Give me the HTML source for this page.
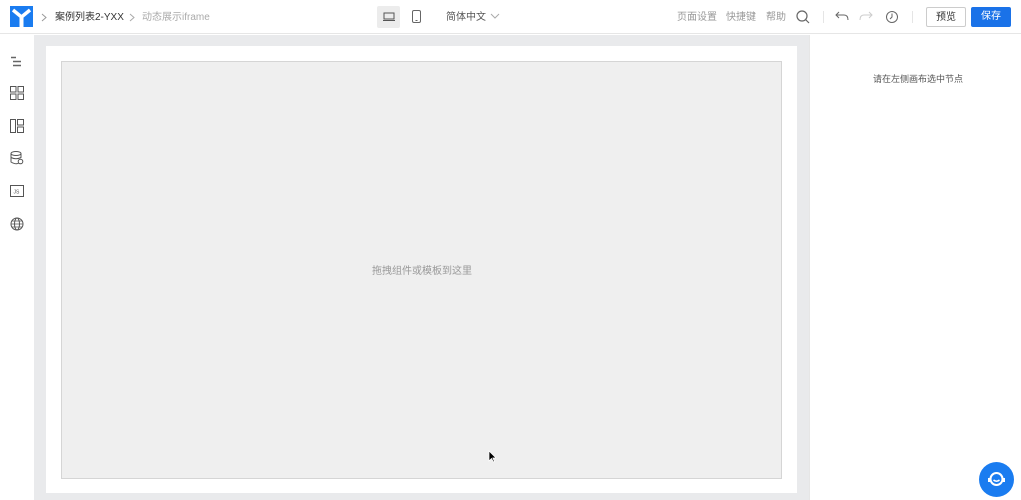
<!DOCTYPE html>
<html><head><meta charset="utf-8"><style>
*{margin:0;padding:0;box-sizing:border-box}
body{width:1021px;height:500px;overflow:hidden;background:#fff;font-family:"Liberation Sans","Noto Sans CJK SC",sans-serif;position:relative}
.hd{position:absolute;left:0;top:0;width:1021px;height:34px;border-bottom:1px solid #e6e6e6;background:#fff}
.t{position:absolute;font-size:10px;white-space:nowrap;line-height:12px}
.side{position:absolute;left:0;top:35px;width:34px;height:465px;background:#fff}
.canvas{position:absolute;left:34px;top:35px;width:775px;height:465px;background:#e9eaec}
.page{position:absolute;left:12px;top:11px;width:751px;height:447px;background:#fff}
.drop{position:absolute;left:15px;top:15px;width:721px;height:418px;background:#efefef;border:1px solid #d5d5d5}
.right{position:absolute;left:809px;top:35px;width:212px;height:465px;background:#fff}
svg{position:absolute}
</style></head><body>
<div class="hd">
 <div style="position:absolute;left:10px;top:6px;width:23px;height:21px;background:#1a7cf0"></div>
 <svg style="left:10px;top:6px" width="23" height="21"><path d="M3 4 L11.5 11 L20 4" stroke="#fff" stroke-width="3.5" fill="none"/><path d="M11.5 11 V21" stroke="#fff" stroke-width="4"/></svg>
 <svg style="left:41px;top:13px" width="6" height="9"><path d="M1 1L5 4.5L1 8" stroke="#999" fill="none"/></svg>
 <div class="t" style="left:55px;top:12px;color:#333">案例列表2-YXX</div>
 <svg style="left:129px;top:13px" width="6" height="9"><path d="M1 1L5 4.5L1 8" stroke="#aaa" fill="none"/></svg>
 <div class="t" style="left:142px;top:12px;color:#aaa">动态展示iframe</div>
 <div style="position:absolute;left:377px;top:6px;width:23px;height:22px;background:#ececec;border-radius:2px"></div>
 <svg style="left:383px;top:12px" width="12" height="10"><rect x="1" y="1" width="10" height="6" fill="none" stroke="#555"/><path d="M0 8.5H12" stroke="#555"/></svg>
 <svg style="left:412px;top:10px" width="9" height="14"><rect x="0.5" y="0.5" width="8" height="12" rx="1.5" fill="none" stroke="#666"/><path d="M3.5 10.5H5.5" stroke="#666"/></svg>
 <div class="t" style="left:446px;top:12px;color:#555">简体中文</div>
 <svg style="left:490px;top:13px" width="10" height="7"><path d="M1 1L5 5L9 1" stroke="#aaa" fill="none"/></svg>
 <div class="t" style="left:677px;top:12px;color:#999">页面设置</div>
 <div class="t" style="left:726px;top:12px;color:#999">快捷键</div>
 <div class="t" style="left:766px;top:12px;color:#999">帮助</div>
 <svg style="left:796px;top:10px" width="14" height="14"><circle cx="6" cy="6" r="5" fill="none" stroke="#666" stroke-width="1.2"/><path d="M9.5 9.5L13 13" stroke="#666" stroke-width="1.2"/></svg>
 <div style="position:absolute;left:823px;top:11px;width:1px;height:12px;background:#e5e5e5"></div>
 <svg style="left:835px;top:11px" width="14" height="10"><path d="M4 1L1 4L4 7M1 4H9Q13 4 13 9" stroke="#666" fill="none"/></svg>
 <svg style="left:859px;top:11px" width="14" height="10"><path d="M10 1L13 4L10 7M13 4H5Q1 4 1 9" stroke="#ccc" fill="none"/></svg>
 <svg style="left:885px;top:10px" width="14" height="14"><circle cx="7" cy="7" r="5.5" fill="none" stroke="#666"/><path d="M7 3.5V7L5 9" stroke="#666" fill="none"/></svg>
 <div style="position:absolute;left:912px;top:11px;width:1px;height:12px;background:#e5e5e5"></div>
 <div style="position:absolute;left:926px;top:7px;width:40px;height:20px;border:1px solid #ccc;border-radius:2px;font-size:10px;text-align:center;line-height:20px;color:#333">预览</div>
 <div style="position:absolute;left:971px;top:7px;width:40px;height:20px;background:#1a72e8;border-radius:2px;font-size:10px;text-align:center;line-height:20px;color:#fff">保存</div>
</div>
<div class="side">
 <svg style="left:10px;top:21px" width="13" height="12"><path d="M1 1.5H6M3 5.5H11M3 9.5H11" stroke="#666" stroke-width="1.5"/></svg>
 <svg style="left:10px;top:51px" width="14" height="14"><rect x="0.5" y="0.5" width="5.5" height="5.5" fill="none" stroke="#555"/><rect x="8" y="0.5" width="5.5" height="5.5" fill="none" stroke="#555"/><rect x="0.5" y="8" width="5.5" height="5.5" fill="none" stroke="#555"/><rect x="8" y="8" width="5.5" height="5.5" fill="none" stroke="#555"/></svg>
 <svg style="left:10px;top:84px" width="14" height="14"><rect x="0.5" y="0.5" width="5" height="13" fill="none" stroke="#555"/><rect x="7.5" y="0.5" width="6" height="5.5" fill="none" stroke="#555"/><rect x="7.5" y="8" width="6" height="5.5" fill="none" stroke="#555"/></svg>
 <svg style="left:10px;top:116px" width="14" height="14"><ellipse cx="6" cy="2.5" rx="5" ry="2" fill="none" stroke="#555"/><path d="M1 2.5V11Q6 14 9 12M1 6.5Q6 9 11 6.5V2.5" fill="none" stroke="#555"/><circle cx="10.5" cy="10.5" r="2.3" fill="none" stroke="#555"/></svg>
 <svg style="left:10px;top:150px" width="14" height="12"><rect x="0.5" y="0.5" width="13" height="11" fill="none" stroke="#555"/><text x="3.5" y="8.5" font-size="5" fill="#555" font-family="Liberation Sans">JS</text></svg>
 <svg style="left:10px;top:182px" width="14" height="14"><circle cx="7" cy="7" r="6" fill="none" stroke="#555"/><ellipse cx="7" cy="7" rx="2.5" ry="6" fill="none" stroke="#555"/><path d="M1 7H13M2 4H12M2 10H12" stroke="#555" stroke-width="0.8"/></svg>
</div>
<div class="canvas"><div class="page"><div class="drop">
 <div class="t" style="left:310px;top:204px;color:#999;font-size:10px">拖拽组件或模板到这里</div>
</div></div></div>
<div class="right"><div style="position:absolute;left:0;top:0;width:1px;height:465px;background:#e6e6e6"></div>
 <div class="t" style="left:64px;top:38px;color:#555;font-size:9px">请在左侧画布选中节点</div>
</div>
<div style="position:absolute;left:979px;top:462px;width:35px;height:35px;border-radius:50%;background:#1a7cf0"></div>
<svg style="left:986px;top:469px" width="21" height="21"><circle cx="10.5" cy="10" r="6" fill="none" stroke="#fff" stroke-width="2"/><path d="M7.5 11Q10.5 13.5 13.5 11" stroke="#fff" fill="none" stroke-width="1.5"/><path d="M3 9V13M18 9V13" stroke="#fff" stroke-width="2"/></svg>
<svg style="left:488px;top:450px" width="8" height="13"><path d="M1 1V11L3.5 8.5L5.5 12L6.5 11.5L4.8 8H8Z" fill="#000" stroke="#fff" stroke-width="0.7"/></svg>
</body></html>
